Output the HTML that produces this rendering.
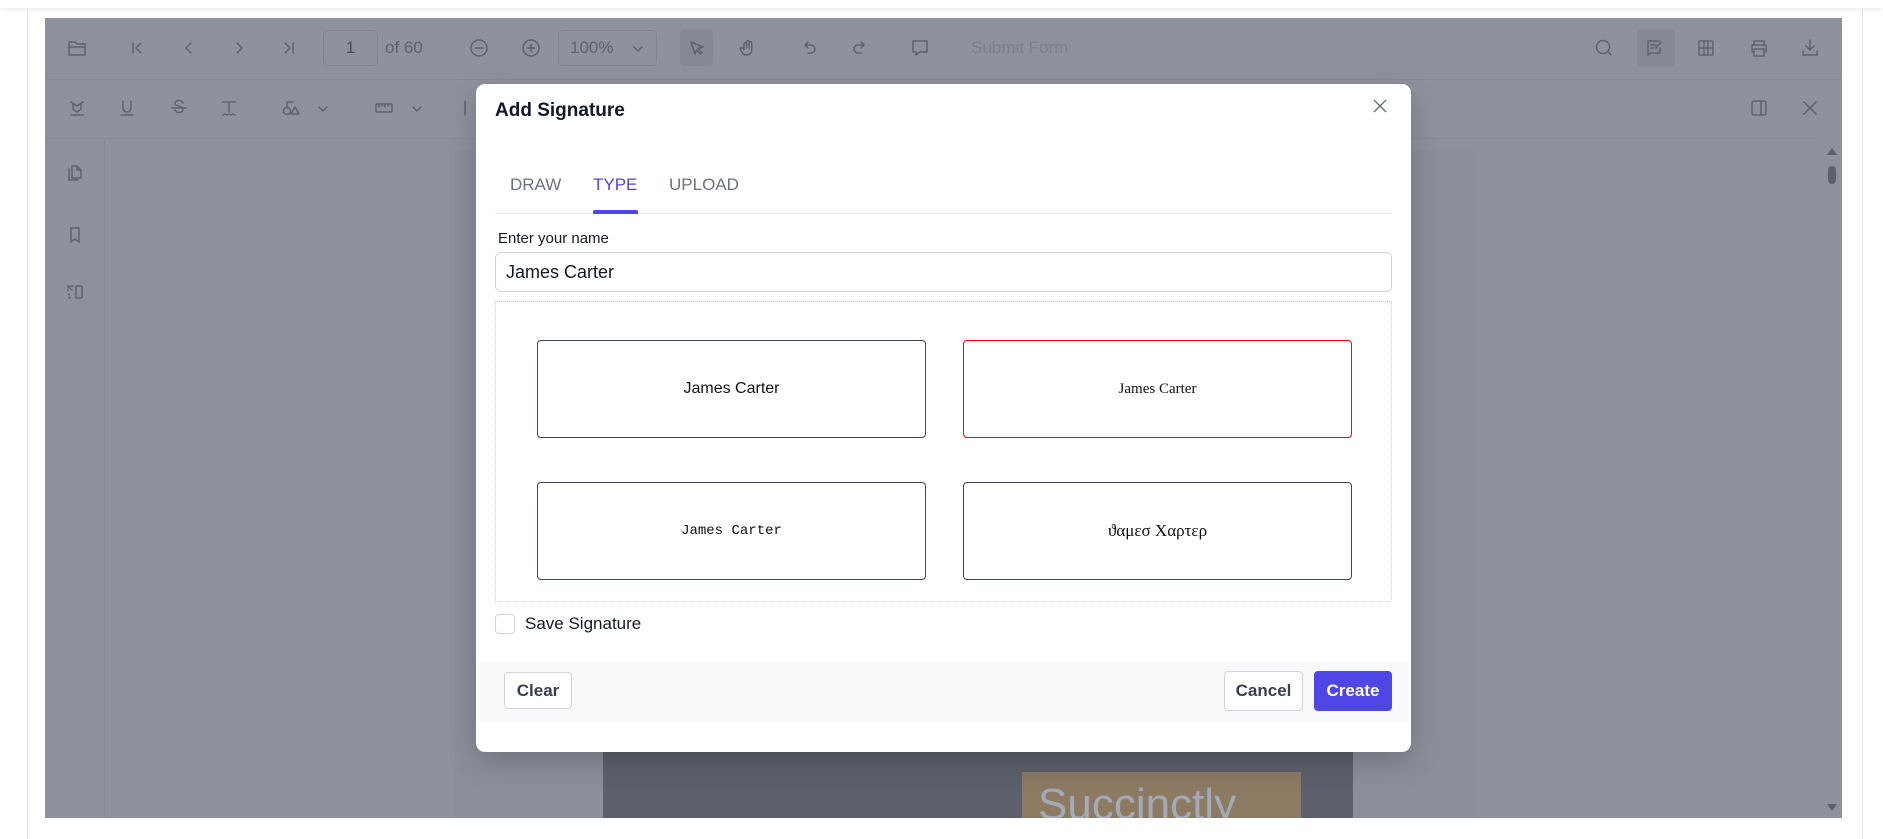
<!DOCTYPE html>
<html><head><meta charset="utf-8">
<style>
*{box-sizing:border-box;margin:0;padding:0}
body{width:1883px;height:839px;background:#fff;position:relative;overflow:hidden;font-family:"Liberation Sans",sans-serif}
.abs{position:absolute}
.topbar{left:0;top:0;width:1883px;height:8px;background:#fff;box-shadow:0 2px 6px rgba(0,0,0,.08)}
.frame{left:27px;top:8px;width:1836px;height:831px;border-left:1px solid #e5e7eb;border-right:1px solid #e5e7eb}
.viewer{left:45px;top:18px;width:1797px;height:800px;background:#8e929d;overflow:hidden}
.ic{position:absolute;width:22px;height:22px;transform:translate(-11px,-11px)}
.ic svg{width:22px;height:22px;fill:none;stroke:#5d626e;stroke-width:1.5;stroke-linecap:round;stroke-linejoin:round}
.t{position:absolute;color:#5d626e;font-size:17px}
.dlg{left:476px;top:84px;width:935px;height:668px;background:#fff;border-radius:9px;box-shadow:0 10px 30px rgba(0,0,0,.2)}
.box{position:absolute;width:389px;height:98px;border:1px solid #3f4653;border-radius:4px;display:flex;align-items:center;justify-content:center;color:#111}
.btn{position:absolute;border:1px solid #d1d5db;border-radius:4px;background:#fff;font-weight:bold;font-size:17px;color:#374151;display:flex;align-items:center;justify-content:center}
</style></head><body>
<div class="abs topbar"></div>
<div class="abs frame"></div>
<div class="abs viewer">
  <div class="abs" style="left:0;top:61px;width:1797px;height:1px;background:#868a95"></div>
  <div class="abs" style="left:0;top:120px;width:1797px;height:1px;background:#868a95"></div>
  <div class="abs" style="left:59px;top:121px;width:1px;height:680px;background:#868a95"></div>
  <div class="abs" style="left:409px;top:132px;width:1021px;height:670px;background:#8b8f9a"></div>
  <div class="abs" style="left:558px;top:734px;width:750px;height:70px;background:#5c606b"></div>
  <div class="abs" style="left:977px;top:754px;width:279px;height:60px;background:#8c7a63;overflow:hidden"><div style="color:#a3aab8;font-size:44px;margin:8px 0 0 16px">Succinctly</div></div>
  <div class="abs" style="left:1773px;top:120px;width:24px;height:680px;background:#8e929d"></div>
  <div class="abs" style="left:1783px;top:148px;width:8px;height:18px;border-radius:4px;background:#5d626e"></div>
  <div class="abs" style="left:1782px;top:130px;width:0;height:0;border-left:5px solid transparent;border-right:5px solid transparent;border-bottom:7px solid #5d626e"></div>
  <div class="abs" style="left:1782px;top:786px;width:0;height:0;border-left:5px solid transparent;border-right:5px solid transparent;border-top:7px solid #5d626e"></div>
  <div class="ic" style="left:32px;top:30px"><svg viewBox="0 0 22 22"><path d="M3 5h6l2 2h8v11H3z M3 10h16"/></svg></div>
  <div class="ic" style="left:92px;top:30px"><svg viewBox="0 0 22 22"><path d="M7 6v10 M15 6l-5 5 5 5"/></svg></div>
  <div class="ic" style="left:144px;top:30px"><svg viewBox="0 0 22 22"><path d="M13 6l-5 5 5 5"/></svg></div>
  <div class="ic" style="left:194px;top:30px"><svg viewBox="0 0 22 22"><path d="M9 6l5 5-5 5"/></svg></div>
  <div class="ic" style="left:244px;top:30px"><svg viewBox="0 0 22 22"><path d="M7 6l5 5-5 5 M15 6v10"/></svg></div>
  <div class="abs" style="left:278px;top:12px;width:55px;height:36px;border:1px solid #80848f;border-radius:5px;color:#4b505b;font-size:17px;text-align:center;line-height:34px">1</div>
  <div class="t" style="left:340px;top:20px">of 60</div>
  <div class="ic" style="left:434px;top:30px"><svg viewBox="0 0 22 22"><circle cx="11" cy="11" r="8"/><path d="M7.5 11h7"/></svg></div>
  <div class="ic" style="left:486px;top:30px"><svg viewBox="0 0 22 22"><circle cx="11" cy="11" r="8"/><path d="M7.5 11h7 M11 7.5v7"/></svg></div>
  <div class="abs" style="left:513px;top:12px;width:99px;height:36px;border:1px solid #80848f;border-radius:5px"></div>
  <div class="t" style="left:525px;top:20px">100%</div>
  <div class="ic" style="left:593px;top:31px"><svg viewBox="0 0 22 22"><path d="M7 9l4 4 4-4"/></svg></div>
  <div class="abs" style="left:635px;top:12px;width:33px;height:36px;border-radius:4px;background:#858994"></div>
  <div class="ic" style="left:652px;top:30px"><svg viewBox="0 0 22 22"><path d="M5 5l12 5-5 1.5 4 4-1.5 1.5-4-4L9 17z"/></svg></div>
  <div class="ic" style="left:703px;top:30px"><svg viewBox="0 0 22 22"><path d="M7 12V7a1.3 1.3 0 012.6 0v4V5a1.3 1.3 0 012.6 0v6V6a1.3 1.3 0 012.6 0v7a5 5 0 01-5 5h-1c-2 0-3-1-4-3l-1.5-3a1.2 1.2 0 012-1z"/></svg></div>
  <div class="ic" style="left:764px;top:30px"><svg viewBox="0 0 22 22"><path d="M8 8H13a4 4 0 010 8h-3 M10 5L7 8l3 3"/></svg></div>
  <div class="ic" style="left:815px;top:30px"><svg viewBox="0 0 22 22"><path d="M14 8H9a4 4 0 000 8h3 M12 5l3 3-3 3"/></svg></div>
  <div class="ic" style="left:875px;top:30px"><svg viewBox="0 0 22 22"><path d="M4 4h14v11h-7l-4 3v-3H4z"/></svg></div>
  <div class="t" style="left:926px;top:20px;color:#7b808b">Submit Form</div>
  <div class="ic" style="left:1559px;top:30px"><svg viewBox="0 0 22 22"><circle cx="10" cy="10" r="6.5"/><path d="M15 15l3 3"/></svg></div>
  <div class="abs" style="left:1592px;top:12px;width:38px;height:36px;border-radius:4px;background:#858994"></div>
  <div class="ic" style="left:1610px;top:30px"><svg viewBox="0 0 22 22"><path d="M4 4h11 M4 4v14l3-2h9v-5 M7 8h5 M7 11h3 M17 5l-5 6"/></svg></div>
  <div class="ic" style="left:1661px;top:30px"><svg viewBox="0 0 22 22"><rect x="4" y="4" width="14" height="14" rx="1"/><path d="M9 4v14 M13 4v14 M4 11h14"/></svg></div>
  <div class="ic" style="left:1714px;top:30px"><svg viewBox="0 0 22 22"><path d="M6 8V4h10v4 M4 8h14v7h-2 M6 15H4V8 M6 12h10v7H6z"/></svg></div>
  <div class="ic" style="left:1765px;top:30px"><svg viewBox="0 0 22 22"><path d="M11 3v10 M7 9l4 4 4-4 M4 14v4h14v-4"/></svg></div>
  <div class="ic" style="left:32px;top:90px"><svg viewBox="0 0 22 22"><path d="M5 5l6 4 6-4 M7 7v5l4 3 4-3V7 M5 18h12"/></svg></div>
  <div class="ic" style="left:82px;top:90px"><svg viewBox="0 0 22 22"><path d="M7 4v7a4 4 0 008 0V4 M5 18h12"/></svg></div>
  <div class="ic" style="left:134px;top:90px"><svg viewBox="0 0 22 22"><path d="M15 6a4 3 0 00-8 1c0 2 8 2 8 5a4 3 0 01-8 1 M4 11h14"/></svg></div>
  <div class="ic" style="left:184px;top:90px"><svg viewBox="0 0 22 22"><path d="M5 5h12 M11 5v10 M5 18l2-1 2 1 2-1 2 1 2-1 2 1"/></svg></div>
  <div class="ic" style="left:246px;top:90px"><svg viewBox="0 0 22 22"><circle cx="7" cy="14" r="3.5"/><path d="M7 10V5h6 M11 17l4-7 4 7z"/></svg></div>
  <div class="ic" style="left:278px;top:91px"><svg viewBox="0 0 22 22"><path d="M7 9l4 4 4-4"/></svg></div>
  <div class="ic" style="left:339px;top:90px"><svg viewBox="0 0 22 22"><rect x="3" y="7" width="16" height="8" rx="1"/><path d="M6 7v3 M9 7v2 M12 7v3 M15 7v2"/></svg></div>
  <div class="ic" style="left:372px;top:91px"><svg viewBox="0 0 22 22"><path d="M7 9l4 4 4-4"/></svg></div>
  <div class="ic" style="left:425px;top:90px"><svg viewBox="0 0 22 22"><path d="M6 4v14"/></svg></div>
  <div class="ic" style="left:1714px;top:90px"><svg viewBox="0 0 22 22"><rect x="4" y="4" width="14" height="14" rx="2"/><path d="M13 4v14"/></svg></div>
  <div class="ic" style="left:1765px;top:90px"><svg viewBox="0 0 22 22"><path d="M5 5l12 12 M17 5L5 17"/></svg></div>
  <div class="ic" style="left:30px;top:155px"><svg viewBox="0 0 22 22"><path d="M8 4h5l4 4v8H8z M13 4v4h4 M5 7v11h9"/></svg></div>
  <div class="ic" style="left:30px;top:217px"><svg viewBox="0 0 22 22"><path d="M7 4h8v14l-4-3-4 3z"/></svg></div>
  <div class="ic" style="left:30px;top:274px"><svg viewBox="0 0 22 22"><rect x="12" y="5" width="6" height="12" rx="1"/><path d="M4 10V5h5 M4 5l4 4 M5 13v1 M5 16v1h3" stroke-dasharray="2 2"/></svg></div>
</div>

<div class="abs dlg">
  <div class="abs" style="left:19px;top:16px;font-size:19px;font-weight:bold;color:#111827">Add Signature</div>
  <svg class="abs" style="left:895px;top:13px" width="18" height="18" viewBox="0 0 18 18"><path d="M3 3l12 12M15 3L3 15" stroke="#6b7280" stroke-width="1.5" fill="none"/></svg>
  <div class="abs" style="left:34px;top:91px;font-size:17px;color:#6b7280">DRAW</div>
  <div class="abs" style="left:117px;top:91px;font-size:17px;color:#4f46e5">TYPE</div>
  <div class="abs" style="left:193px;top:91px;font-size:17px;color:#6b7280">UPLOAD</div>
  <div class="abs" style="left:19px;top:129px;width:897px;height:1px;background:#e5e7eb"></div>
  <div class="abs" style="left:117px;top:126px;width:45px;height:4px;border-radius:2px 2px 0 0;background:#4f46e5"></div>
  <div class="abs" style="left:22px;top:146px;font-size:15px;color:#111827">Enter your name</div>
  <div class="abs" style="left:19px;top:168px;width:897px;height:40px;border:1px solid #d1d5db;border-radius:6px;font-size:18px;color:#111827;padding:9px 0 0 10px">James Carter</div>
  <div class="abs" style="left:19px;top:217px;width:897px;height:301px;border:1px dotted #c7cad1"></div>
  <div class="box" style="left:61px;top:256px;font-size:16px">James Carter</div>
  <div class="box" style="left:487px;top:256px;border-color:#ff0000;font-family:'Liberation Serif',serif;font-size:15px">James Carter</div>
  <div class="box" style="left:61px;top:398px;font-family:'Liberation Mono',monospace;font-size:14px">James Carter</div>
  <div class="box" style="left:487px;top:398px;font-family:'Liberation Serif','DejaVu Serif',serif;font-size:17px">ϑαμεσ Χαρτερ</div>
  <div class="abs" style="left:19px;top:530px;width:20px;height:20px;border:1px solid #d1d5db;border-radius:4px"></div>
  <div class="abs" style="left:49px;top:530px;font-size:17px;color:#111827">Save Signature</div>
  <div class="abs" style="left:3px;top:578px;width:929px;height:60px;background:#f8f9fb"></div>
  <div class="btn" style="left:28px;top:588px;width:68px;height:37px">Clear</div>
  <div class="btn" style="left:748px;top:587px;width:79px;height:40px">Cancel</div>
  <div class="btn" style="left:838px;top:587px;width:78px;height:40px;background:#4f46e5;border-color:#4f46e5;color:#fff">Create</div>
</div>
</body></html>
